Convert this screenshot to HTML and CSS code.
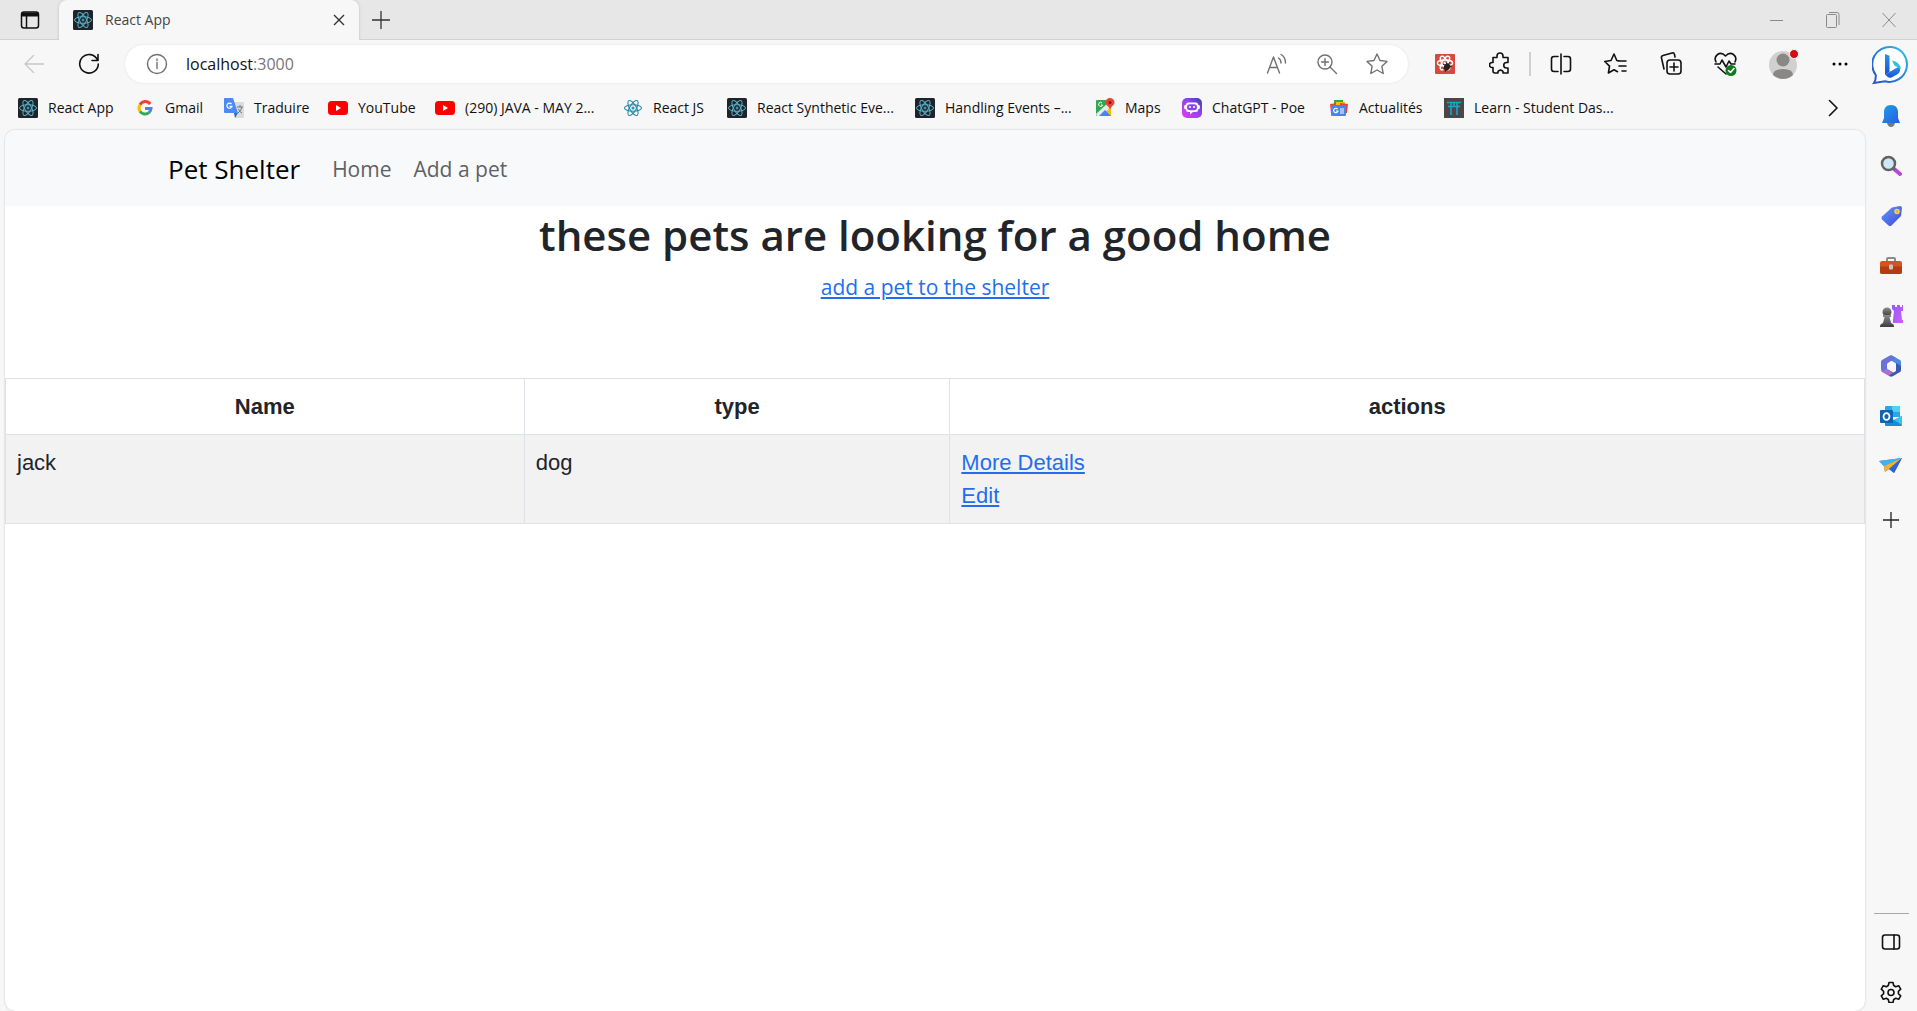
FILE: index.html
```html
<!DOCTYPE html>
<html lang="en">
<head>
<meta charset="utf-8">
<title>React App</title>
<link rel="stylesheet" href="styles.css">
</head>
<body>
<svg class="defs" aria-hidden="true">
  <defs>
    <linearGradient id="blue" x1="0" y1="0" x2="1" y2="1"><stop offset="0" stop-color="#1ba0e8"/><stop offset="1" stop-color="#2b5be0"/></linearGradient>
    <linearGradient id="bingRing" x1="0" y1="1" x2="1" y2="0"><stop offset="0" stop-color="#2c4fc4"/><stop offset=".5" stop-color="#2580d8"/><stop offset="1" stop-color="#35c2ee"/></linearGradient>
    <linearGradient id="bingB" x1="0" y1="0" x2="0" y2="1"><stop offset="0" stop-color="#2796ee"/><stop offset="1" stop-color="#1c4ed0"/></linearGradient>
    <linearGradient id="tag" x1="0" y1="0" x2="1" y2="1"><stop offset="0" stop-color="#5f9bfa"/><stop offset="1" stop-color="#4047d8"/></linearGradient>
    <linearGradient id="rook" x1="0" y1="0" x2="1" y2="1"><stop offset="0" stop-color="#8f5cf5"/><stop offset="1" stop-color="#d65cf5"/></linearGradient>
    <linearGradient id="pawn" x1="0" y1="0" x2="0" y2="1"><stop offset="0" stop-color="#8b8b8b"/><stop offset="1" stop-color="#3d3d3d"/></linearGradient>
    <linearGradient id="poe" x1="0" y1="1" x2="1" y2="0"><stop offset="0" stop-color="#e23cf0"/><stop offset=".6" stop-color="#8a45e6"/><stop offset="1" stop-color="#3c3fae"/></linearGradient>
    <g id="atom" fill="none">
      <ellipse cx="10" cy="10" rx="8.5" ry="3.3"/>
      <ellipse cx="10" cy="10" rx="8.5" ry="3.3" transform="rotate(60 10 10)"/>
      <ellipse cx="10" cy="10" rx="8.5" ry="3.3" transform="rotate(120 10 10)"/>
      <circle cx="10" cy="10" r="1"/>
    </g>
    <symbol id="react" viewBox="0 0 20 20"><rect width="20" height="20" rx="1.5" fill="#20232a"/><use href="#atom" stroke="#58b5ca"/></symbol>
    <symbol id="youtube" viewBox="0 0 20 20"><rect y="3" width="20" height="14" rx="3.5" fill="#f00"/><path d="M8 7v6l5-3z" fill="#fff"/></symbol>
  </defs>
</svg>

<div class="tabstrip">
  <button class="tab-actions" aria-label="Tab actions"><svg width="20" height="20" viewBox="0 0 20 20" fill="none" stroke="#111" stroke-width="1.5"><rect x="1.5" y="2" width="17" height="16" rx="2.5"/><path d="M6.5 6v12"/><path d="M2 4.500h16" stroke-width="4"/></svg></button>
  <div class="tab">
    <svg class="fav"><use href="#react"/></svg>
    <span class="tab-title">React App</span>
    <button class="tab-close" aria-label="Close tab"><svg width="12" height="12" viewBox="0 0 12 12" stroke="#333" stroke-width="1.4"><path d="M1 1l10 10M11 1L1 11"/></svg></button>
  </div>
  <button class="new-tab" aria-label="New tab"><svg width="18" height="18" viewBox="0 0 18 18" stroke="#333" stroke-width="1.3"><path d="M9 0v18M0 9h18"/></svg></button>
  <div class="window-controls">
    <button aria-label="Minimize"><svg width="14" height="14" viewBox="0 0 14 14"><path d="M0 7.500h13"/></svg></button>
    <button aria-label="Restore"><svg width="14" height="18" viewBox="0 0 14 18"><rect x=".5" y="3.500" width="10" height="13" rx="1"/><path d="M3 1.500h8q2 0 2 2V14"/></svg></button>
    <button aria-label="Close"><svg width="14" height="16" viewBox="0 0 14 16"><path d="M.5 1l13 14M13.500 1L.5 15"/></svg></button>
  </div>
</div>

<div class="window">
  <div class="main">
    <div class="toolbar">
      <button class="tool" aria-label="Back"><svg width="20" height="18" viewBox="0 0 20 18" class="line faint"><path d="M9.500.5L1 9l8.500 8.500M1 9h19"/></svg></button>
      <button class="tool" aria-label="Refresh"><svg width="22" height="22" viewBox="0 0 22 22" class="line bold"><path d="M19.500 7A9.300 9.300 0 1 0 20.300 11M20 1.500v6h-6"/></svg></button>
      <div class="address">
        <button class="info" aria-label="View site information"><svg width="22" height="22" viewBox="0 0 22 22" class="line grey"><circle cx="11" cy="11" r="9.500"/><path d="M11 9.500v6M11 6v1.500"/></svg></button>
        <label class="url"><input type="text" value="localhost" size="9" aria-label="Address"><span>:3000</span></label>
        <button class="in-bar" aria-label="Read aloud"><svg width="22" height="22" viewBox="0 0 22 22" class="line grey"><path d="M1.500 20L7.500 4l6 16M3.500 14.500h8M12.500 5q2.500 1.500 2.500 5M15 1.500q4.500 2.500 4.500 8.500"/></svg></button>
        <button class="in-bar" aria-label="Zoom"><svg width="22" height="22" viewBox="0 0 22 22" class="line grey"><circle cx="9" cy="9" r="7"/><path d="M14 14l6.500 6.500M9 5.500v7M5.500 9h7"/></svg></button>
        <button class="in-bar" aria-label="Add to favorites"><svg width="22" height="22" viewBox="0 0 22 22" class="line grey"><path d="M11 1l3 6.500 7 .9-5.100 4.900 1.300 7.200L11 17l-6.200 3.500 1.300-7.200L1 8.400l7-.9z"/></svg></button>
      </div>
      <button class="tool" aria-label="Extension"><svg width="20" height="22" viewBox="0 0 20 22"><rect y="1" width="20" height="20" rx="1" fill="#d8493d"/><g transform="translate(1 1) scale(.9)" stroke="#fff" stroke-width="1.500"><use href="#atom"/></g><ellipse cx="12" cy="14" rx="3" ry="3.800" fill="#222" transform="rotate(35 12 14)"/><path d="M8 11l4 2M11 9l1 3M15 9l-2 3M17 13l-3 1M8 16l3-1M10 19l1-2" stroke="#222"/></svg></button>
      <button class="tool" aria-label="Extensions"><svg width="22" height="24" viewBox="0 0 22 24" class="line bold"><path d="M4 5.500H8V4a3 3 0 0 1 6 0v1.500h5v5h-1.500a2.500 2.500 0 0 0 0 5.500H19v5h-5v-1.500a3 3 0 0 0-5 0V21H6q-2 0-2-2v-3.500H3a2.500 2.500 0 0 1 0-5h1z"/></svg></button>
      <span class="rule"></span>
      <button class="tool" aria-label="Split screen"><svg width="22" height="22" viewBox="0 0 22 22" class="line bold"><path d="M8 3.500H4q-2.500 0-2.500 2.500v10q0 2.500 2.500 2.500h4M11 1v20M14 3.500h4q2.500 0 2.500 2.500v10q0 2.500-2.500 2.500h-4"/></svg></button>
      <button class="tool" aria-label="Favorites"><svg width="24" height="22" viewBox="0 0 24 22" class="line bold"><path d="M14 8h8M15 13h7M18 18h4M16 8l-3.200-.5L10 1 7 7.500l-6.200 1 4.700 4.600L4.400 20l5.600-3.300 3.500 2"/></svg></button>
      <button class="tool" aria-label="Collections"><svg width="22" height="24" viewBox="0 0 22 24" class="line bold"><rect x="7" y="8" width="14" height="14" rx="3"/><path d="M14 11v8M10 15h8M4 17L1.500 6q-.5-2 1.500-2.500L12 1q2-.5 2.500 1.500L15 5"/></svg></button>
      <button class="tool" aria-label="Browser essentials"><svg width="24" height="26" viewBox="0 0 24 26" class="line bold"><path d="M2 11C-1 5 6-1 11.500 5 17-1 24 5 21 11M1 13h5l2-4 4 7 3-6 2 3h4M4 16l8 7"/><circle cx="17" cy="19.500" r="5.500" fill="#0f7b1e" stroke="none"/><path d="M14.500 19.500l2 2 3.500-4" stroke="#fff"/></svg></button>
      <button class="tool profile" aria-label="Profile"><svg width="32" height="38" viewBox="0 0 32 38"><circle cx="15" cy="20" r="14" fill="#d2d0ce"/><circle cx="15" cy="15" r="6.500" fill="#8a8886"/><path d="M5 30q0-6 10-6t10 6q-4 4-10 4T5 30" fill="#8a8886"/><circle cx="26" cy="9" r="4.500" fill="#d40b12" stroke="#f7f7f7"/></svg></button>
      <button class="tool overflow" aria-label="Settings and more"><svg width="18" height="6" viewBox="0 0 18 6"><circle cx="3" cy="3" r="1.500"/><circle cx="9" cy="3" r="1.500"/><circle cx="15" cy="3" r="1.500"/></svg></button>
    </div>

    <nav class="bookmarks" aria-label="Favorites bar">
      <a href="#"><svg class="fav"><use href="#react"/></svg>React App</a>
      <a href="#"><svg class="fav" viewBox="0 0 20 20" fill="none" stroke-width="3"><path d="M15.200 6A6 6 0 0 0 5 6.800" stroke="#ea4335"/><path d="M5 6.800a6 6 0 0 0 0 6.400" stroke="#fbbc05"/><path d="M5 13.200a6 6 0 0 0 9 1.500" stroke="#34a853"/><path d="M14 14.700a6 6 0 0 0 2-4.200h-6" stroke="#4285f4"/></svg>Gmail</a>
      <a href="#"><svg class="fav" viewBox="0 0 20 20"><path d="M8 4h11q1 0 1 1v14q0 1-1 1h-8z" fill="#d9dbdd"/><path d="M1 0h8l5 15H1q-1 0-1-1V1q0-1 1-1z" fill="#4c8bf5"/><path d="M10 15h4l-3 5z" fill="#3367d6"/><path d="M7.500 6A2.600 2.600 0 1 0 8 8.300H5.500" fill="none" stroke="#fff" stroke-width="1.200"/><path d="M13 9h6M16 7v2M18 9q-1 4-4 6M14.500 11q1 3 3.500 4" fill="none" stroke="#777"/></svg>Traduire</a>
      <a href="#"><svg class="fav"><use href="#youtube"/></svg>YouTube</a>
      <a href="#"><svg class="fav"><use href="#youtube"/></svg>(290) JAVA - MAY 2...</a>
      <a href="#"><svg class="fav" viewBox="0 0 20 20"><g stroke="#2386a8" stroke-width="1.100"><use href="#atom"/></g></svg>React JS</a>
      <a href="#"><svg class="fav"><use href="#react"/></svg>React Synthetic Eve...</a>
      <a href="#"><svg class="fav"><use href="#react"/></svg>Handling Events –...</a>
      <a href="#"><svg class="fav" viewBox="0 0 20 20"><path d="M2 2h12v16H2q-1 0-1-1V3q0-1 1-1z" fill="#2da94f"/><path d="M2 18L16 5v13z" fill="#fbbc05"/><path d="M1 16L14 4l3 4L6 18H2z" fill="#e8eaed"/><path d="M4 18l6-6 6 6z" fill="#4285f4"/><path d="M7 5A2 2 0 1 0 7.500 7H6" fill="none" stroke="#fff"/><path d="M15 0a4.500 4.500 0 0 1 4.500 4.500C19.500 8 15.500 8 15 12c-.5-4-4.500-4-4.500-7.500A4.500 4.500 0 0 1 15 0" fill="#ea4335"/><circle cx="15" cy="4.500" r="1.500" fill="#811"/></svg>Maps</a>
      <a href="#"><svg class="fav" viewBox="0 0 20 20"><rect width="20" height="20" rx="5" fill="url(#poe)"/><path d="M6 4.500h8q2 0 2 2 2 0 2 2.500t-2 2.500q0 2.500-2 2.500h-3l-3 2.500V14H6q-2 0-2-2.500-2 0-2-2.500t2-2.500q0-2 2-2z" fill="#fff"/><rect x="5" y="6.200" width="10" height="6" rx="3" fill="#8a45e6"/><path d="M8 8v2M12 8v2" stroke="#fff" stroke-width="1.500"/></svg>ChatGPT - Poe</a>
      <a href="#"><svg class="fav" viewBox="0 0 20 20"><path d="M5 2h9v8H5z" fill="#2da94f"/><path d="M1 6l8-1v10H2z" fill="#ea4335"/><path d="M7 4h9v6H7z" fill="#fbbc05"/><path d="M11 5l8 1-1 9h-7z" fill="#ea4335"/><rect x="2" y="7" width="15" height="11" rx="1" fill="#4285f4"/><path d="M8.500 11A2.200 2.200 0 1 0 9 13H7M11 11h4M11 13h4M11 15h4" stroke="#fff" fill="none" stroke-width="1.200"/></svg>Actualités</a>
      <a href="#"><svg class="fav" viewBox="0 0 20 20"><rect width="20" height="20" fill="#484848"/><path d="M3 4.500h14M4 8.500h12M7 5v12M13 5v12M10 5v3" stroke="#1ba3cf" stroke-width="1.600" fill="none"/></svg>Learn - Student Das...</a>
      <button class="more" aria-label="More favorites"><svg width="10" height="18" viewBox="0 0 10 18" class="line bold"><path d="M1.500 1.500L9 9l-7.500 7.500"/></svg></button>
    </nav>

    <div class="page">
      <nav class="navbar">
        <a class="brand" href="#">Pet Shelter</a>
        <a class="nav-link" href="#">Home</a>
        <a class="nav-link" href="#">Add a pet</a>
      </nav>
      <header class="intro">
        <h1>these pets are looking for a good home</h1>
        <a href="#">add a pet to the shelter</a>
      </header>
      <table>
        <thead><tr><th class="col-name">Name</th><th class="col-type">type</th><th>actions</th></tr></thead>
        <tbody><tr><td>jack</td><td>dog</td><td><a href="#">More Details</a><br><a href="#">Edit</a></td></tr></tbody>
      </table>
    </div>
  </div>

  <aside class="sidebar">
    <button class="bing" aria-label="Bing chat"><svg width="38" height="40" viewBox="0 0 38 40"><path d="M19.500 2A17.500 17.500 0 1 1 13 36.300L2 38q2-3 1.800-8A17.500 17.500 0 0 1 19.500 2z" fill="#fff" stroke="url(#bingRing)" stroke-width="2"/><path d="M13 9l4.500 1.800V27L13 29.500z" fill="url(#bingB)"/><path d="M13 29.500l14-8q3 5-2 8l-5.500 3q-2 1-4-.8z" fill="url(#bingB)"/><path d="M20 15.500q8 1.500 9 8.500-3-2-6.500-3.200z" fill="#35c2d8"/></svg></button>
    <button aria-label="Notifications"><svg width="22" height="22" viewBox="0 0 22 22"><path d="M7 18h8q-1 4-4 4t-4-4" fill="#777"/><path d="M11 0c5 0 7 3.500 7 7v6l2 5H2l2-5V7c0-3.500 2-7 7-7" fill="url(#blue)"/></svg></button>
    <button aria-label="Search"><svg width="22" height="22" viewBox="0 0 22 22"><path d="M13 13l7 6" stroke="#b847dd" stroke-width="4" stroke-linecap="round"/><path d="M12 12l3 3" stroke="#666" stroke-width="2"/><circle cx="8.500" cy="8.500" r="6.500" fill="#cfe8f9" stroke="#626262" stroke-width="2.500"/></svg></button>
    <button aria-label="Shopping"><svg width="22" height="22" viewBox="0 0 22 22"><path d="M12 2.500L20 1q2 0 2 2l-1 8-9.500 9.500q-1.500 1-3 0L2 14.500q-1-1.500 0-3z" fill="url(#tag)"/><circle cx="17" cy="6.500" r="2" fill="#bdb27b" stroke="#f7d04d" stroke-width="1.500"/></svg></button>
    <button aria-label="Tools"><svg width="22" height="22" viewBox="0 0 22 22"><path d="M7 6V4q0-1 1-1h6q1 0 1 1v2" fill="none" stroke="#8b8b8b" stroke-width="2"/><rect x="0" y="6" width="22" height="13" rx="2" fill="#d4541e"/><path d="M0 11.500h22V17q0 2-2 2H2q-2 0-2-2z" fill="#b53b12"/><rect x="9" y="9.500" width="4" height="5" rx="1" fill="#c8c3c0"/></svg></button>
    <button aria-label="Games"><svg width="24" height="24" viewBox="0 0 24 24"><path d="M13 1h3v2h2V1h3v2h2V1h1v6h-2l1 9h2v3H14v-3l1-9-2-2z" fill="url(#rook)"/><circle cx="8" cy="8" r="4.500" fill="url(#pawn)"/><path d="M4 11h8v2h-1.500l1.500 6q3 1 3 3v1H1v-1q0-2 3-3l1.500-6H4z" fill="url(#pawn)"/></svg></button>
    <button aria-label="Microsoft 365"><svg width="22" height="22" viewBox="0 0 22 22"><path d="M11 0l9 5q1 .6 1 2v8l-5-2.500V8.500L7 3z" fill="#4a8be4"/><path d="M9 1q2-1.200 4 0l3 2-8 5v6l-5 3q-2-.8-2-3V7q0-1.400 1-2z" fill="#6d72d8"/><path d="M1 13q0 3 3 3l4-2 8 5-3 2q-2 1.200-4 0l-7-4q-1-.6-1-2z" fill="#a970cc"/><path d="M21 11v4q0 1.400-1 2l-7 4q-2 1-4-.5L16 16V8z" fill="#3b57b4"/><path d="M11 6.500l4 2.300v4.600l-4 2.300-4-2.300V8.800z" fill="#f7f7f7"/></svg></button>
    <button aria-label="Outlook"><svg width="22" height="22" viewBox="0 0 22 22"><path d="M6 1h13q1 0 1 1v10H5V2q0-1 1-1" fill="#28a8ea"/><path d="M12 1h7q1 0 1 1v5h-8z" fill="#50d0f4"/><path d="M5 11l9 4 8-4v9q0 1-1 1H6q-1 0-1-1z" fill="#1a8bd8"/><path d="M22 11v9l-8-5z" fill="#36c4f1"/><rect y="5" width="13" height="13" rx="1" fill="#0d64b5"/><ellipse cx="6.500" cy="11.500" rx="3" ry="3.400" fill="none" stroke="#fff" stroke-width="1.800"/></svg></button>
    <button aria-label="Drop"><svg width="24" height="22" viewBox="0 0 24 22"><path d="M0 6l23-3-8 15-5-4-4 3-1-6z" fill="#2f80e0"/><path d="M0 6l23-3L5 11z" fill="#3fb2ee"/><path d="M5 11l18-8L10 14l-4 3z" fill="#f5b02e"/><path d="M10 14l13-11-8 15z" fill="#2b63cf"/></svg></button>
    <button class="add" aria-label="Customize"><svg width="16" height="16" viewBox="0 0 16 16" stroke="#222" stroke-width="1.300"><path d="M8 0v16M0 8h16"/></svg></button>
    <div class="sidebar-end">
      <button aria-label="Hide sidebar"><svg width="20" height="20" viewBox="0 0 20 20" class="line bold"><rect x="1.500" y="3" width="17" height="14" rx="2.500"/><path d="M13 3v14"/></svg></button>
      <button class="settings" aria-label="Settings"><svg width="22" height="22" viewBox="0 0 22 22" class="line bold"><path d="M9 1.500h4l.7 3 2 1.200 3-1 2 3.500-2.300 2.100v2.400l2.300 2.100-2 3.500-3-1-2 1.200-.7 3H9l-.7-3-2-1.200-3 1-2-3.500 2.300-2.100v-2.400L1.300 8.200l2-3.500 3 1 2-1.200z"/><circle cx="11" cy="11.500" r="3"/></svg></button>
    </div>
  </aside>
</div>
</body>
</html>
```
FILE: styles.css
```css
* { box-sizing: border-box; }

body {
  margin: 0;
  min-height: 100vh;
  display: flex;
  flex-direction: column;
  background: #f7f7f7;
  color: #111;
  font: 14px/20px "Open Sans", "Noto Sans", sans-serif;
}

button {
  display: flex;
  align-items: center;
  justify-content: center;
  padding: 0;
  border: 0;
  background: none;
  color: inherit;
}

svg { flex: none; }
.defs { position: absolute; width: 0; height: 0; }
.fav { width: 20px; height: 20px; }

.line { fill: none; stroke: #111; stroke-width: 1.4; stroke-linecap: round; stroke-linejoin: round; }
.bold { stroke-width: 1.6; }
.grey { stroke: #707070; }
.faint { stroke: #c8c8c8; }

/* Tab strip */
.tabstrip {
  display: flex;
  height: 40px;
  background: #e7e7e7;
  border-bottom: 1px solid #d2d2d2;
}
.tab-actions { width: 59px; }
.tab {
  display: flex;
  align-items: center;
  width: 300px;
  height: 40px;
  padding: 0 14px;
  background: #f7f7f7;
  border-radius: 8px 8px 0 0;
  box-shadow: 0 0 3px #bbb;
  clip-path: inset(0 -4px 0 -4px);
}
.tab-title { flex: 1; margin-left: 12px; color: #444; }
.tab-close { width: 12px; }
.new-tab { width: 44px; }
.window-controls { display: flex; margin-left: auto; }
.window-controls button { width: 56px; }
.window-controls svg { fill: none; stroke: #8a8a8a; }

/* Window body */
.window { flex: 1; display: flex; }
.main { flex: 1; min-width: 0; display: flex; flex-direction: column; }

.toolbar { display: flex; align-items: center; height: 47px; padding-left: 6px; }
.tool { width: 55px; height: 40px; }
.profile { width: 62px; }
.overflow { width: 50px; }
.rule { width: 2px; height: 24px; margin: 0 2px; background: #d0d0d0; }
.address {
  flex: 1;
  display: flex;
  align-items: center;
  height: 38px;
  margin: 0 9px;
  padding-left: 21px;
  padding-right: 6px;
  background: #fff;
  border-radius: 19px;
  box-shadow: 0 0 3px #e4e4e4;
}
.info { width: 22px; margin-right: 18px; }
.url { flex: 1; display: flex; align-items: center; font-size: 16px; color: #767676; }
.url input {
  field-sizing: content;
  padding: 0;
  border: 0;
  outline: 0;
  background: none;
  color: #111;
  font: inherit;
}
.in-bar { width: 50px; height: 32px; }

.bookmarks {
  display: grid;
  grid-template-columns: 117px 89px 104px 107px 188px 104px 188px 180px 87px 147px 115px 1fr 64px;
  align-items: center;
  height: 43px;
  padding: 0 0 2px 18px;
}
.bookmarks a {
  display: flex;
  align-items: center;
  gap: 10px;
  color: #111;
  text-decoration: none;
  white-space: nowrap;
}

/* Web page */
.page {
  flex: 1;
  margin-left: 5px;
  background: #fff;
  border-radius: 10px;
  box-shadow: 0 0 2px #bbb;
  overflow: hidden;
  color: #212529;
  font-size: 21px;
  line-height: 33px;
}
.navbar {
  display: flex;
  align-items: center;
  height: 76px;
  padding-top: 2px;
  padding-left: 163px;
  background: #f8f9fa;
}
.navbar a { text-decoration: none; }
.brand { margin-right: 32px; color: #000; font-size: 26px; }
.nav-link { margin-right: 22px; color: #5f6163; }
.intro { padding-top: 2px; text-align: center; }
.intro h1 { margin: 0 0 10px; font-size: 42px; font-weight: 600; line-height: 53px; }
.intro a, td a { color: #1f6feb; }

table {
  width: 100%;
  margin-top: 74px;
  border-collapse: collapse;
  font-family: "Liberation Sans", Arial, sans-serif;
  font-size: 22px;
}
th, td { padding: 11px; border: 1px solid #dee2e6; vertical-align: top; }
td { text-align: left; background: #f2f2f2; }
.col-name { width: 27.9%; }
.col-type { width: 22.9%; }

/* Sidebar */
.sidebar { display: flex; flex-direction: column; width: 52px; }
.sidebar button { width: 52px; height: 50px; }
.sidebar .bing { height: 49px; margin-bottom: 2px; }
.sidebar .add { height: 58px; }
.sidebar-end { margin-top: auto; }
.sidebar-end::before {
  content: "";
  display: block;
  width: 35px;
  height: 1px;
  margin: 0 9px 3px;
  background: #a8a8a8;
}
.sidebar .settings { height: 38px; margin-top: 6px; }
```
